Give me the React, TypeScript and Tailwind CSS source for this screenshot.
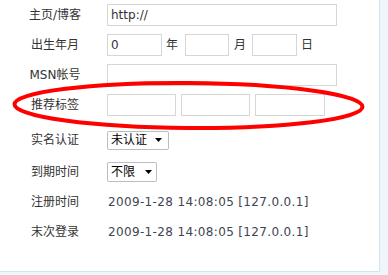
export default function App() {
  const font = { fontFamily: '"DejaVu Sans", "Noto Sans CJK SC", sans-serif' };
  const label = "w-[107px] shrink-0 pl-[3px] text-center text-[12px] text-[#333]";
  const input = "h-[22px] border border-[#d6d6d6] bg-white px-[3px] text-[12px] text-[#333] outline-none";

  return (
    <div className="h-[275px] w-[388px] bg-[#eef6fc]" style={font}>
      <div className="relative h-[272px] w-[380px] border-b border-r border-[#d4e5f2] bg-white">
        {/* 主页/博客 */}
        <div className="flex h-[30px] items-center">
          <div className={label}>主页/博客</div>
          <input className={`${input} w-[230px]`} defaultValue="http://" />
        </div>

        {/* 出生年月 */}
        <div className="flex h-[30px] items-center">
          <div className={label}>出生年月</div>
          <input className={`${input} w-[55px]`} defaultValue="0" />
          <span className="ml-[4px] mr-[7px] text-[12px] text-[#333]">年</span>
          <input className={`${input} w-[44px]`} />
          <span className="ml-[5px] mr-[6px] text-[12px] text-[#333]">月</span>
          <input className={`${input} w-[45px]`} />
          <span className="ml-[4px] text-[12px] text-[#333]">日</span>
        </div>

        {/* MSN帐号 */}
        <div className="flex h-[30px] items-center">
          <div className={label}>MSN帐号</div>
          <input className={`${input} w-[230px]`} />
        </div>

        {/* 推荐标签 */}
        <div className="flex h-[30px] items-center gap-[5px]">
          <div className={`${label} mr-[-5px]`}>推荐标签</div>
          <input className={`${input} w-[69px]`} />
          <input className={`${input} w-[69px]`} />
          <input className={`${input} w-[70px]`} />
        </div>

        {/* 实名认证 */}
        <div className="mt-[5px] flex h-[30px] items-center">
          <div className={label}>实名认证</div>
          <div className="flex h-[19px] w-[62px] items-center justify-between rounded-[2px] border border-[#b8bec6] pl-[3px] pr-[6px] text-[12px] text-black">
            <span>未认证</span>
            <svg width="7" height="4" viewBox="0 0 7 4"><path d="M0 0h7L3.5 4z" fill="#000" /></svg>
          </div>
        </div>

        {/* 到期时间 */}
        <div className="mt-[2px] flex h-[30px] items-center">
          <div className={label}>到期时间</div>
          <div className="flex h-[20px] w-[50px] items-center justify-between rounded-[2px] border border-[#b8bec6] pl-[3px] pr-[4px] text-[12px] text-black">
            <span>不限</span>
            <svg width="7" height="4" viewBox="0 0 7 4"><path d="M0 0h7L3.5 4z" fill="#000" /></svg>
          </div>
        </div>

        {/* 注册时间 */}
        <div className="flex h-[30px] items-center">
          <div className={label}>注册时间</div>
          <span className="pl-[1px] text-[12px] tracking-[0.35px] text-[#3e4552]">2009-1-28 14:08:05 [127.0.0.1]</span>
        </div>

        {/* 末次登录 */}
        <div className="flex h-[30px] items-center">
          <div className={label}>末次登录</div>
          <span className="pl-[1px] text-[12px] tracking-[0.35px] text-[#3e4552]">2009-1-28 14:08:05 [127.0.0.1]</span>
        </div>

        {/* red annotation ring */}
        <svg className="pointer-events-none absolute left-0 top-0" width="380" height="272">
          <ellipse cx="188.5" cy="105.5" rx="174" ry="22.5" fill="none" stroke="#ff0000" strokeWidth="4" transform="rotate(0.4 188.5 105.5)" />
        </svg>
      </div>
    </div>
  );
}
